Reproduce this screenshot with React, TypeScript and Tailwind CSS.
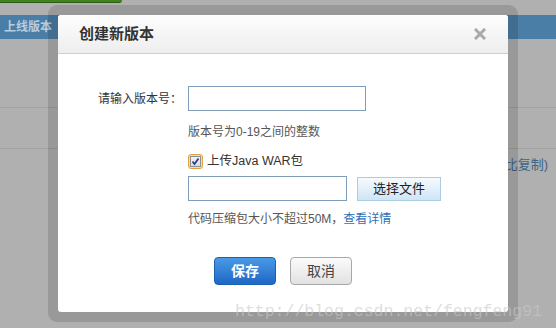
import { useState } from 'react'

const CJK = { fontFamily: "'Liberation Sans', 'Noto Sans CJK SC', sans-serif" }

function CloseIcon() {
  return (
    <svg width="12" height="12" viewBox="0 0 12 12" className="block">
      <path d="M2 2 L10 10 M10 2 L2 10" stroke="#a9a9a9" strokeWidth="3" strokeLinecap="square" />
    </svg>
  )
}

function CheckBox({ checked, onToggle }: { checked: boolean; onToggle: () => void }) {
  return (
    <button
      type="button"
      onClick={onToggle}
      className="flex h-[15px] w-[15px] items-center justify-center rounded-[3px] border border-[#e2a33c] bg-[#f6deb0]"
    >
      <span className="flex h-[11px] w-[11px] items-center justify-center border border-[#8a8f9a] bg-gradient-to-b from-[#f2f2f2] to-[#dcdcdc]">
        {checked && (
          <svg width="9" height="9" viewBox="0 0 9 9" className="block">
            <path d="M1.5 4.5 L3.5 7 L7.5 1.5" fill="none" stroke="#2b3f8a" strokeWidth="1.8" />
          </svg>
        )}
      </span>
    </button>
  )
}

export default function App() {
  const [withWar, setWithWar] = useState(true)

  return (
    <div style={CJK} className="relative h-[328px] w-[556px] overflow-hidden bg-[#b0b0b0]">
      {/* dimmed page underneath */}
      <div className="h-[3px] w-[122px] rounded-br-[3px] border-b border-[#2b5e14] bg-[#3f8420]" />
      <div className="mt-[12px] flex h-[24px] items-center bg-[#4a7ea6] pl-[4px] text-[12px] font-bold text-[#b8cde0]">
        上线版本
      </div>
      <div className="h-[69px] border-b border-[#a3a3a3]" />
      <div className="h-[41px] border-b border-[#a3a3a3]" />
      <div className="flex justify-end pr-[8px] pt-[6px] text-[13px] text-[#3d6587]">比复制)</div>

      {/* modal */}
      <div className="absolute left-[48px] top-[5px] h-[317px] w-[470px] rounded-[9px] bg-black/[0.13] p-[10px]">
        <div className="flex h-full flex-col overflow-hidden rounded-[3px] bg-white">
          <div className="flex h-[39px] shrink-0 items-center justify-between border-b border-[#cfcfcf] bg-gradient-to-b from-[#fdfdfd] to-[#eeeeee] pl-[21px] pr-[22px]">
            <span className="text-[15px] font-bold text-[#333]">创建新版本</span>
            <CloseIcon />
          </div>

          <div className="grid grid-cols-[130px_1fr] pt-[32px] text-[12px] text-[#333]">
            <label className="flex h-[25px] items-center justify-end pr-[6px]">请输入版本号：</label>
            <input className="h-[25px] w-[178px] border border-[#7f9cb8] px-1 outline-none" />

            <div />
            <p className="mt-[13px] h-[16px] leading-[16px] text-[#555]">版本号为0-19之间的整数</p>

            <div />
            <div className="mt-[13px] flex h-[16px] items-center gap-[4px] text-[12.5px]">
              <CheckBox checked={withWar} onToggle={() => setWithWar(!withWar)} />
              <span>上传Java WAR包</span>
            </div>

            <div />
            <div className="mt-[7px] flex items-center gap-[10px]">
              <input className="h-[25px] w-[159px] border border-[#7f9cb8] px-1 outline-none" />
              <button
                type="button"
                className="h-[24px] w-[84px] border border-[#a9cde3] bg-gradient-to-b from-[#f6fbfe] to-[#cfe5f5] text-[13px] text-[#222]"
              >
                选择文件
              </button>
            </div>

            <div />
            <p className="mt-[10px] h-[16px] leading-[16px] text-[#555]">
              代码压缩包大小不超过50M，<span className="text-[#2f6fb7]">查看详情</span>
            </p>
          </div>

          <div className="mt-[30px] flex justify-center gap-[14px]">
            <button
              type="button"
              className="h-[28px] w-[62px] rounded-[4px] border border-[#1c5fae] bg-gradient-to-b from-[#4a9ae6] to-[#1e67c6] text-[14px] font-bold text-white"
            >
              保存
            </button>
            <button
              type="button"
              className="h-[28px] w-[62px] rounded-[4px] border border-[#a8a8a8] bg-gradient-to-b from-[#fbfbfb] to-[#e2e2e2] text-[14px] text-[#444]"
            >
              取消
            </button>
          </div>
        </div>
      </div>

      {/* watermark */}
      <div
        style={{ fontFamily: "'Liberation Mono', monospace" }}
        className="pointer-events-none absolute left-[235px] top-[302px] text-[16.5px] leading-[20px] text-[#c8c8c8]/60"
      >
        http://blog.csdn.net/fengfeng91
      </div>
    </div>
  )
}
